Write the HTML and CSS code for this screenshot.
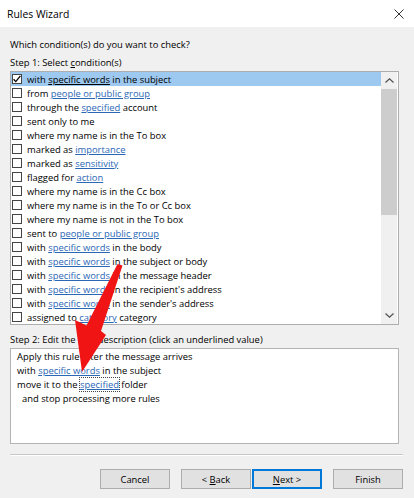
FILE: index.html
```html
<!DOCTYPE html>
<html>
<head>
<meta charset="utf-8">
<link rel="stylesheet" href="styles.css">
</head>
<body>
<div class="titlebar">
  <span class="title">Rules Wizard</span>
  <svg class="close" width="10" height="10" viewBox="0 0 10 10"><path d="M0.5 0.5 L9.5 9.5 M9.5 0.5 L0.5 9.5" stroke="#333" stroke-width="1" fill="none"/></svg>
</div>
<div class="content">
  <div class="q">Which condition(s) do you want to check?</div>
  <div class="step1">Step 1: Select <span class="ak">c</span>ondition(s)</div>
  <div class="listbox">
    <div class="rows">
      <div class="row sel"><span class="cb"><svg width="8" height="8" viewBox="0 0 8 8"><path d="M0.6 4.2 L2.8 6.6 L7.4 0.8" stroke="#000" stroke-width="1.3" fill="none"/></svg></span><span>with <span class="lks">specific words</span> in the subject</span></div>
      <div class="row"><span class="cb"></span><span>from <span class="lk">people or public group</span></span></div>
      <div class="row"><span class="cb"></span><span>through the <span class="lk">specified</span> account</span></div>
      <div class="row"><span class="cb"></span><span>sent only to me</span></div>
      <div class="row"><span class="cb"></span><span>where my name is in the To box</span></div>
      <div class="row"><span class="cb"></span><span>marked as <span class="lk">importance</span></span></div>
      <div class="row"><span class="cb"></span><span>marked as <span class="lk">sensitivity</span></span></div>
      <div class="row"><span class="cb"></span><span>flagged for <span class="lk">action</span></span></div>
      <div class="row"><span class="cb"></span><span>where my name is in the Cc box</span></div>
      <div class="row"><span class="cb"></span><span>where my name is in the To or Cc box</span></div>
      <div class="row"><span class="cb"></span><span>where my name is not in the To box</span></div>
      <div class="row"><span class="cb"></span><span>sent to <span class="lk">people or public group</span></span></div>
      <div class="row"><span class="cb"></span><span>with <span class="lk">specific words</span> in the body</span></div>
      <div class="row"><span class="cb"></span><span>with <span class="lk">specific words</span> in the subject or body</span></div>
      <div class="row"><span class="cb"></span><span>with <span class="lk">specific words</span> in the message header</span></div>
      <div class="row"><span class="cb"></span><span>with <span class="lk">specific words</span> in the recipient's address</span></div>
      <div class="row"><span class="cb"></span><span>with <span class="lk">specific words</span> in the sender's address</span></div>
      <div class="row"><span class="cb"></span><span>assigned to <span class="lk">category</span> category</span></div>
    </div>
    <div class="sb">
      <div class="sb-btn"><svg width="9" height="5" viewBox="0 0 9 5"><path d="M0.5 4.5 L4.5 0.8 L8.5 4.5" stroke="#505050" stroke-width="1.2" fill="none"/></svg></div>
      <div class="thumb"></div>
      <div class="track"></div>
      <div class="sb-btn"><svg width="9" height="5" viewBox="0 0 9 5"><path d="M0.5 0.5 L4.5 4.2 L8.5 0.5" stroke="#505050" stroke-width="1.2" fill="none"/></svg></div>
    </div>
  </div>
  <div class="step2">Step 2: Edit the rule description (click an underlined value)</div>
  <div class="desc">
    <div>Apply this rule after the message arrives</div>
    <div>with <span class="lk">specific words</span> in the subject</div>
    <div>move it to the <span class="lk focus">specified</span> folder</div>
    <div class="indent">and stop processing more rules</div>
  </div>
  <div class="sep"></div>
  <div class="buttons">
    <div class="btn cancel">Cancel</div>
    <div class="btn back">&lt;&nbsp;<span class="ak">B</span>ack</div>
    <div class="btn next default"><span class="ak">N</span>ext&nbsp;&gt;</div>
    <div class="btn finish">Finish</div>
  </div>
</div>
<svg class="arrow" width="414" height="498" viewBox="0 0 414 498">
  <path d="M117.5 264 L122.5 265.5 L101 331 L106 335 L82 372 L75 320 L86.5 325.5 Z" fill="#f01414"/>
</svg>
</body>
</html>
```
FILE: styles.css
```css
html, body {
  margin: 0;
  padding: 0;
}
body {
  width: 414px;
  height: 498px;
  overflow: hidden;
  background: #f0f0f0;
  font-family: "Open Sans", "Noto Sans", sans-serif;
  font-size: 9.4px;
  color: #000;
  position: relative;
}
.titlebar {
  height: 27px;
  background: #fff;
  display: flex;
  align-items: center;
  justify-content: space-between;
  padding: 0 10px 0 7px;
  box-sizing: border-box;
}
.title {
  font-size: 10.4px;
}
.close {
  display: block;
}
.content {
  padding: 9px 11px 0 10px;
}
.q {
  line-height: 18px;
}
.step1 {
  line-height: 17px;
}
.ak {
  text-decoration: underline;
}
.listbox {
  width: 389px;
  height: 254px;
  box-sizing: border-box;
  border: 1px solid #adadad;
  background: #fff;
  display: flex;
}
.rows {
  flex: 1;
  min-width: 0;
  overflow: hidden;
}
.row {
  height: 14px;
  display: flex;
  align-items: center;
  white-space: nowrap;
}
.row.sel {
  background: #9dc8ef;
}
.cb {
  width: 10px;
  height: 10px;
  box-sizing: border-box;
  border: 1px solid #444;
  background: #fff;
  margin: 0 5px 0 1px;
  display: flex;
  align-items: center;
  justify-content: center;
  flex: none;
}
.cb svg {
  display: block;
}
.lk {
  color: #2b67b5;
  text-decoration: underline;
}
.lks {
  text-decoration: underline;
}
.sb {
  width: 16px;
  margin-right: 1px;
  display: flex;
  flex-direction: column;
  background: #f0f0f0;
}
.sb-btn {
  height: 17px;
  display: flex;
  align-items: center;
  justify-content: center;
}
.sb-btn svg {
  display: block;
}
.thumb {
  height: 126px;
  background: #cdcdcd;
}
.track {
  flex: 1;
}
.step2 {
  margin-top: 7px;
  line-height: 16px;
}
.desc {
  width: 389px;
  height: 96px;
  box-sizing: border-box;
  border: 1px solid #b4b4b4;
  background: #fff;
  padding: 1px 6px;
  line-height: 14px;
}
.indent {
  padding-left: 5px;
}
.focus {
  outline: 1px dotted #444;
}
.sep {
  margin-top: 10px;
  height: 1px;
  background: #c8c8c8;
  border-bottom: 1px solid #fff;
}
.buttons {
  display: flex;
  justify-content: flex-end;
  margin-top: 13px;
}
.btn {
  width: 70px;
  height: 20px;
  box-sizing: border-box;
  border: 1px solid #adadad;
  background: #e1e1e1;
  display: flex;
  align-items: center;
  justify-content: center;
}
.btn.cancel {
  margin-right: 11px;
}
.btn.back {
  margin-right: 1px;
}
.btn.default {
  border-color: #0078d7;
  box-shadow: inset 0 0 0 1px #0078d7;
}
.btn.finish {
  margin-left: 11px;
}
.arrow {
  position: absolute;
  left: 0;
  top: 0;
  pointer-events: none;
}
```
